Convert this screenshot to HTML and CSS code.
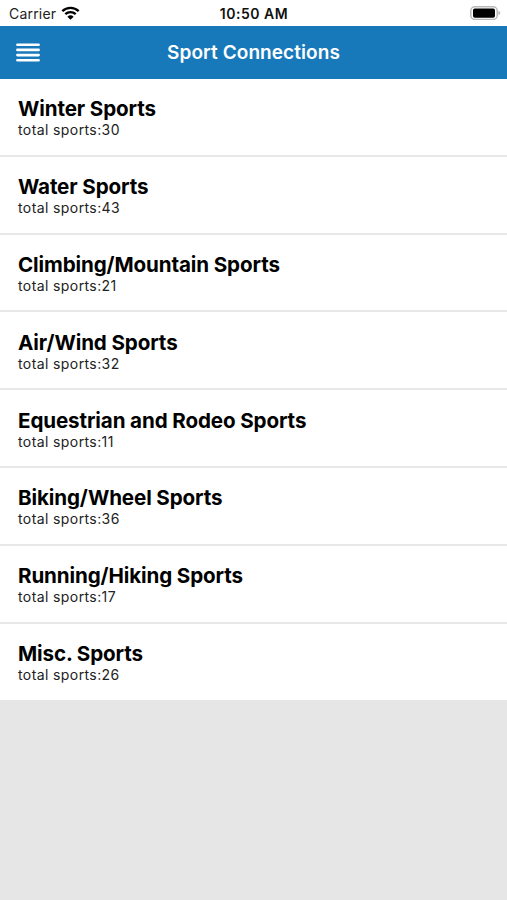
FILE: index.html
```
<!DOCTYPE html>
<html lang="en">
<head>
    <meta charset="UTF-8">
    <meta name="viewport" content="width=device-width, initial-scale=1.0">
    <title>Sport Connections</title>
    <link rel="stylesheet" href="styles.css">
</head>
<body>
    <div class="status-bar">
        <div class="carrier">
            <span>Carrier</span>
            <svg class="wifi" width="19" height="14" viewBox="0 0 19 14">
                <path d="M1.3 5.1a11.8 11.8 0 0 1 16.4 0M4.3 8.2a7.5 7.5 0 0 1 10.4 0" fill="none" stroke="#000" stroke-width="2.3"/>
                <path d="M9.5 13.8L6.4 10.7a4.5 4.5 0 0 1 6.2 0z"/>
            </svg>
        </div>
        <div class="time">10:50 AM</div>
        <div class="status-right">
            <svg class="battery" width="31" height="14" viewBox="0 0 31 14">
                <rect x="0.8" y="0.8" width="26.4" height="12.6" rx="4" fill="#fff" stroke="#b9b9b9" stroke-width="1.5"/>
                <rect x="3" y="2.5" width="22" height="9.2" rx="1.8"/>
                <path d="M28.4 4.7q2 1 2 2.3t-2 2.3z" fill="#b9b9b9"/>
            </svg>
        </div>
    </div>

    <header>
        <button class="menu" aria-label="Menu">
            <svg width="24" height="19" viewBox="0 0 24 19">
                <path d="M1.4 1.7h21.2M1.4 6.9h21.2M1.4 12.1h21.2M1.4 17.3h21.2" stroke="#fff" stroke-width="2.6" stroke-linecap="round"/>
            </svg>
        </button>
        <h1>Sport Connections</h1>
    </header>

    <main>
        <ul class="sports">
            <li><h2>Winter Sports</h2><p>total sports:30</p></li>
            <li><h2>Water Sports</h2><p>total sports:43</p></li>
            <li><h2>Climbing/Mountain Sports</h2><p>total sports:21</p></li>
            <li><h2>Air/Wind Sports</h2><p>total sports:32</p></li>
            <li><h2>Equestrian and Rodeo Sports</h2><p>total sports:11</p></li>
            <li><h2>Biking/Wheel Sports</h2><p>total sports:36</p></li>
            <li><h2>Running/Hiking Sports</h2><p>total sports:17</p></li>
            <li><h2>Misc. Sports</h2><p>total sports:26</p></li>
        </ul>
    </main>
</body>
</html>
```
FILE: styles.css
```
* {
    margin: 0;
    padding: 0;
    box-sizing: border-box;
    font-family: Inter, "Liberation Sans", sans-serif;
}

body {
    background-color: #e6e6e6;
    color: #000;
}

.status-bar {
    display: grid;
    grid-template-columns: 1fr auto 1fr;
    align-items: center;
    height: 25.5px;
    padding: 1px 6px 0 9px;
    background-color: #fff;
    font-size: 14px;
}

.carrier {
    display: flex;
    align-items: center;
    gap: 5px;
    letter-spacing: 0.2px;
    color: #222;
}

.wifi {
    margin-top: -1px;
}

.time {
    margin-left: -2px;
    font-weight: 600;
    letter-spacing: 0.5px;
    color: #111;
}

.status-right {
    display: flex;
    justify-content: flex-end;
}

header {
    display: grid;
    grid-template-columns: 40px 1fr 40px;
    align-items: center;
    height: 53.5px;
    padding: 0 16px;
    background-color: #1779ba;
    color: #fff;
}

.menu {
    width: 24px;
    height: 19px;
    border: none;
    background: none;
}

.menu svg {
    display: block;
}

h1 {
    font-size: 19px;
    font-weight: 600;
    letter-spacing: 0.08px;
    text-align: center;
}

.sports {
    list-style: none;
    background-color: #fff;
}

.sports li {
    height: 77.8px;
    padding: 17.4px 18px 0;
    border-bottom: 2px solid #e8e8e8;
}

.sports li:last-child {
    height: 76.2px;
    border-bottom: none;
}

.sports h2 {
    font-size: 20.6px;
    font-weight: 700;
    line-height: 26px;
    letter-spacing: -0.12px;
}

.sports p {
    margin-top: -1px;
    font-size: 14px;
    line-height: 17px;
    letter-spacing: 0.4px;
    color: #222;
}
```
